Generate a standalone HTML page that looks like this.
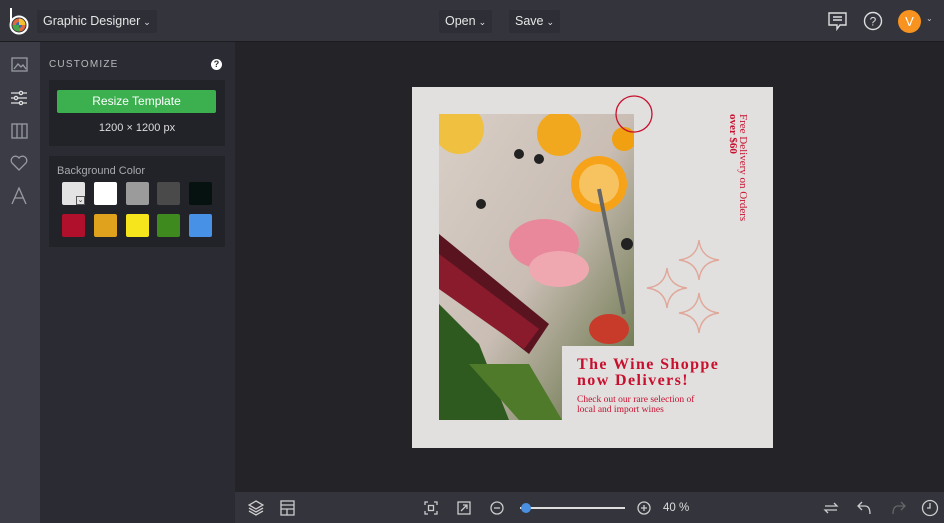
<!DOCTYPE html>
<html><head><style>
*{margin:0;padding:0;box-sizing:border-box}
body{width:944px;height:523px;overflow:hidden;background:#232328;font-family:"Liberation Sans",sans-serif;position:relative}
.top{position:absolute;left:0;top:0;width:944px;height:42px;background:#33343c;border-bottom:1px solid #1c1c20}
.btn{position:absolute;top:10px;height:23px;background:#2e2f36;color:#e6e6e6;font-size:12.5px;line-height:23px;padding:0 6px;border-radius:2px}
.btn small{font-size:9px;margin-left:3px}
.rail{position:absolute;left:0;top:42px;width:40px;height:481px;background:#3b3c45}
.panel{position:absolute;left:40px;top:42px;width:195px;height:481px;background:#2b2c33}
.box{position:absolute;left:9px;width:176px;background:#222328}
.sw{position:absolute;width:23px;height:23px;border-radius:2px}
.bot{position:absolute;left:235px;top:492px;width:709px;height:31px;background:#33343c}
.canvas{position:absolute;left:412px;top:87px;width:361px;height:361px;background:#e1e0df}
.ic{position:absolute;stroke:#9a9ba2;fill:none;stroke-width:1.3}
.serif{font-family:"Liberation Serif",serif;color:#c8102e}
</style></head><body>
<div class="top">
 <svg style="position:absolute;left:8px;top:6px" width="22" height="30"><line x1="3" y1="2" x2="3" y2="16" stroke="#fff" stroke-width="2"/><circle cx="11" cy="19" r="8.5" fill="none" stroke="#fff" stroke-width="2"/><circle cx="11" cy="19" r="6.5" fill="#e0683a"/><circle cx="11" cy="19" r="3" fill="#2d6db5"/><path d="M11 12.5 A6.5 6.5 0 0 1 17.5 19 L11 19Z" fill="#f2c230"/><path d="M4.5 19 A6.5 6.5 0 0 0 11 25.5 L11 19Z" fill="#4aa54a"/></svg>
 <div class="btn" style="left:37px">Graphic Designer<small>⌄</small></div>
 <div class="btn" style="left:439px">Open<small>⌄</small></div>
 <div class="btn" style="left:509px">Save<small>⌄</small></div>
 <svg style="position:absolute;left:828px;top:12px" width="20" height="19" fill="none" stroke="#ddd" stroke-width="1.4"><path d="M1 1h17v12h-6l-3 4v-4H1z"/><path d="M5 5h9M5 8h9" /></svg>
 <svg style="position:absolute;left:863px;top:11px" width="20" height="20"><circle cx="10" cy="10" r="8.5" fill="none" stroke="#ddd" stroke-width="1.4"/><text x="10" y="14.5" text-anchor="middle" fill="#ddd" font-size="12" font-family="Liberation Sans">?</text></svg>
 <div style="position:absolute;left:898px;top:10px;width:23px;height:23px;border-radius:50%;background:#f7931e;color:#fff;font-size:13px;text-align:center;line-height:23px">V</div>
 <div style="position:absolute;left:926px;top:14px;color:#ccc;font-size:8px">⌄</div>
</div>
<div class="rail">
 <svg class="ic" style="left:11px;top:15px" width="18" height="16"><rect x="1" y="1" width="15" height="13"/><path d="M3 12l4-5 3 3 2-2 3 4"/></svg>
 <svg class="ic" style="left:10px;top:48px;stroke:#e0e0e0" width="18" height="16"><path d="M1 3h16M1 8h16M1 13h16"/><circle cx="11" cy="3" r="1.6" fill="#3b3c45"/><circle cx="6" cy="8" r="1.6" fill="#3b3c45"/><circle cx="11" cy="13" r="1.6" fill="#3b3c45"/></svg>
 <svg class="ic" style="left:11px;top:81px" width="18" height="16"><rect x="1" y="1" width="15" height="14"/><path d="M6 1v14M11 1v14"/></svg>
 <svg class="ic" style="left:10px;top:113px" width="18" height="16"><path d="M9 15L2 8a4 4 0 0 1 7-5 4 4 0 0 1 7 5z"/></svg>
 <svg class="ic" style="left:10px;top:145px" width="18" height="18"><path d="M2 17L9 1l7 16M5 11h8"/></svg>
</div>
<div class="panel">
 <div style="position:absolute;left:9px;top:17px;color:#b8b9be;font-size:10px;letter-spacing:1.2px">CUSTOMIZE</div>
 <div style="position:absolute;left:171px;top:17px;width:11px;height:11px;border-radius:50%;background:#fff;color:#2b2c33;font-size:9px;font-weight:bold;text-align:center;line-height:11px">?</div>
 <div class="box" style="top:38px;height:66px">
  <div style="position:absolute;left:8px;top:10px;width:159px;height:23px;background:#3cb04f;border-radius:2px;color:#fff;font-size:12px;text-align:center;line-height:23px">Resize Template</div>
  <div style="position:absolute;left:0;top:42px;width:176px;text-align:center;color:#ddd;font-size:11px">1200 × 1200 px</div>
 </div>
 <div class="box" style="top:114px;height:91px">
  <div style="position:absolute;left:8px;top:9px;color:#a8a9ae;font-size:11px">Background Color</div>
  <div class="sw" style="left:13px;top:26px;background:#e3e3e3"></div>
  <div style="position:absolute;left:27px;top:40px;width:9px;height:9px;background:#e3e3e3;border:1px solid #555;font-size:7px;line-height:7px;text-align:center;color:#333">⌄</div>
  <div class="sw" style="left:45px;top:26px;background:#fff"></div>
  <div class="sw" style="left:77px;top:26px;background:#9b9b9b"></div>
  <div class="sw" style="left:108px;top:26px;background:#4a4a4a"></div>
  <div class="sw" style="left:140px;top:26px;background:#061210"></div>
  <div class="sw" style="left:13px;top:58px;background:#b0102b"></div>
  <div class="sw" style="left:45px;top:58px;background:#e0a21c"></div>
  <div class="sw" style="left:77px;top:58px;background:#f6e51c"></div>
  <div class="sw" style="left:108px;top:58px;background:#3f8a1e"></div>
  <div class="sw" style="left:140px;top:58px;background:#4791e6"></div>
 </div>
</div>
<div class="canvas">
 <svg style="position:absolute;left:27px;top:27px" width="195" height="306">
  <defs><linearGradient id="g" x1="0" y1="0" x2="1" y2="1"><stop offset="0" stop-color="#d8cfc6"/><stop offset=".5" stop-color="#c9bdb4"/><stop offset="1" stop-color="#5a6a3a"/></linearGradient></defs>
  <rect width="195" height="306" fill="url(#g)"/>
  <circle cx="20" cy="15" r="25" fill="#f0c040"/><circle cx="120" cy="20" r="22" fill="#f2a81e"/><circle cx="160" cy="70" r="28" fill="#f7a31a"/><circle cx="160" cy="70" r="20" fill="#f7c360"/>
  <circle cx="185" cy="25" r="12" fill="#f0a010"/>
  <ellipse cx="105" cy="130" rx="35" ry="25" fill="#e8889a"/><ellipse cx="120" cy="155" rx="30" ry="18" fill="#f0a8b0"/>
  <path d="M0 120 L110 210 L90 240 L0 170Z" fill="#5a1420"/><path d="M0 140 L100 215 L85 235 L0 175Z" fill="#8a1b2c"/>
  <path d="M160 75 L185 200" stroke="#666" stroke-width="4"/>
  <path d="M0 190 L40 230 L70 306 L0 306Z" fill="#2f5a1f"/><path d="M30 250 L80 306 L123 306 L90 250Z" fill="#4e7a2a"/>
  <ellipse cx="170" cy="215" rx="20" ry="15" fill="#c83a2a"/>
  <circle cx="80" cy="40" r="5" fill="#222"/><circle cx="100" cy="45" r="5" fill="#222"/><circle cx="188" cy="130" r="6" fill="#222"/><circle cx="42" cy="90" r="5" fill="#222"/>
 </svg>
 <div style="position:absolute;left:150px;top:259px;width:211px;height:102px;background:#e1e0df"></div>
 <svg style="position:absolute;left:200px;top:5px" width="160" height="260">
  <circle cx="22" cy="22" r="18" fill="none" stroke="#c8102e" stroke-width="1.3"/>
  <g fill="none" stroke="#e0a89a" stroke-width="1.4">
   <path d="M87 148 Q89 166 107 168 Q89 170 87 188 Q85 170 67 168 Q85 166 87 148Z"/>
   <path d="M55 176 Q57 194 75 196 Q57 198 55 216 Q53 198 35 196 Q53 194 55 176Z"/>
   <path d="M87 201 Q89 219 107 221 Q89 223 87 241 Q85 223 67 221 Q85 219 87 201Z"/>
  </g>
 </svg>
 <div class="serif" style="position:absolute;left:316px;top:27px;writing-mode:vertical-rl;font-size:11px;line-height:10px">Free Delivery on Orders<br><b>over $60</b></div>
 <div class="serif" style="position:absolute;left:165px;top:270px;font-size:16px;font-weight:bold;letter-spacing:1.4px;line-height:16px">The Wine Shoppe<br>now Delivers!</div>
 <div class="serif" style="position:absolute;left:165px;top:308px;font-size:9.5px;line-height:10px">Check out our rare selection of<br>local and import wines</div>
</div>
<div class="bot">
 <svg class="ic" style="left:13px;top:8px;stroke:#ccc" width="16" height="16"><path d="M8 1l7 4-7 4-7-4z M1 8l7 4 7-4 M1 11l7 4 7-4"/></svg>
 <svg class="ic" style="left:45px;top:8px;stroke:#ccc" width="16" height="16"><rect x="1" y="1" width="13" height="14"/><path d="M1 5h13M1 9h13M7 9v6"/></svg>
 <svg class="ic" style="left:189px;top:9px;stroke:#ccc" width="14" height="14"><path d="M1 4V1h3M10 1h3v3M13 10v3h-3M4 13H1v-3"/><rect x="4.5" y="4.5" width="5" height="5"/></svg>
 <svg class="ic" style="left:222px;top:9px;stroke:#ccc" width="14" height="14"><rect x="1" y="1" width="12" height="12"/><path d="M4 10l6-6M6 4h4v4"/></svg>
 <svg class="ic" style="left:255px;top:9px;stroke:#ccc" width="14" height="14"><circle cx="7" cy="7" r="6"/><path d="M4 7h6"/></svg>
 <div style="position:absolute;left:285px;top:15px;width:105px;height:2px;background:#ddd"></div>
 <div style="position:absolute;left:286px;top:11px;width:10px;height:10px;border-radius:50%;background:#4a90e2"></div>
 <svg class="ic" style="left:402px;top:9px;stroke:#ccc" width="14" height="14"><circle cx="7" cy="7" r="6"/><path d="M4 7h6M7 4v6"/></svg>
 <div style="position:absolute;left:428px;top:10px;color:#ddd;font-size:11.5px">40 %</div>
 <svg class="ic" style="left:588px;top:8px;stroke:#ccc" width="16" height="16"><path d="M2 6h12l-3-3M14 10H2l3 3"/></svg>
 <svg class="ic" style="left:622px;top:8px;stroke:#ccc" width="16" height="16"><path d="M5 2L1 6l4 4M1 6h7q5 0 5 8"/></svg>
 <svg class="ic" style="left:655px;top:8px;stroke:#666" width="16" height="16"><path d="M11 2l4 4-4 4M15 6H8q-5 0-5 8"/></svg>
 <svg class="ic" style="left:686px;top:7px;stroke:#ccc" width="18" height="18"><circle cx="9" cy="9" r="7.5"/><path d="M9 4v5H6"/></svg>
</div>
</body></html>
